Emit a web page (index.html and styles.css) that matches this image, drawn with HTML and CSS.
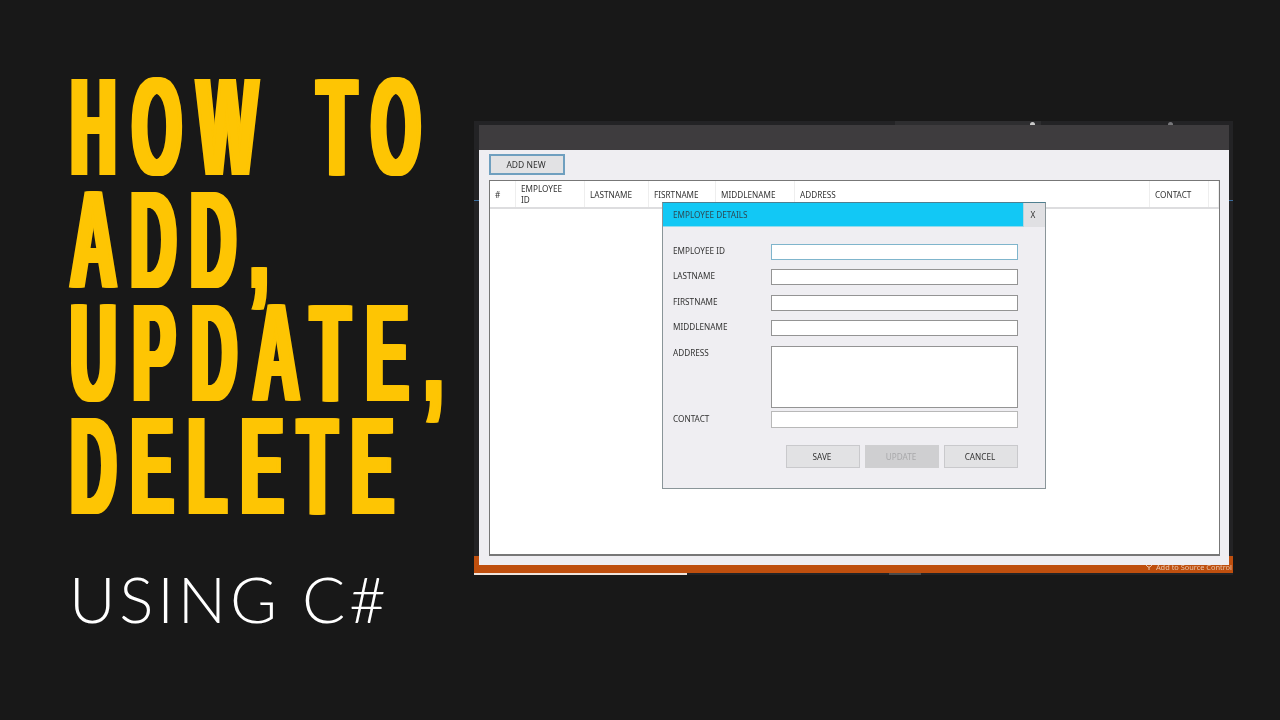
FILE: index.html
```html
<!DOCTYPE html>
<html lang="en">
<head>
<meta charset="utf-8">
<title>How to add, update, delete using C#</title>
<link rel="stylesheet" href="styles.css">
</head>
<body>
<main class="page">
  <section class="intro">
    <h1 class="headline">
      <span class="line line-how">HOW TO</span>
      <span class="line line-add">ADD,</span>
      <span class="line line-update">UPDATE,</span>
      <span class="line line-delete">DELETE</span>
    </h1>
    <p class="subtitle">USING C#</p>
  </section>

  <section class="shot">
    <div class="top-edge"><span class="search-box"></span><span class="dot dot-a"></span><span class="dot dot-b"></span></div>
    <span class="edge-mark edge-left"></span>
    <span class="edge-mark edge-right"></span>
    <div class="statusbar">
      <svg class="plug" viewBox="0 0 8 8" width="8" height="8"><path d="M1 1h6M1 1v2l2 2h2l2-2V1M4 5v3" fill="none" stroke="#e9c3a8" stroke-width="1"/></svg>
      <span class="status-text">Add to Source Control</span>
    </div>
    <span class="status-line"></span>
    <span class="status-tab"></span>
    <div class="window">
      <div class="titlebar"></div>
      <div class="client">
        <button class="add-new">ADD NEW</button>
        <div class="grid">
          <div class="grid-head">
            <div class="col col-num">#</div>
            <div class="col col-id">EMPLOYEE<br>ID</div>
            <div class="col col-last">LASTNAME</div>
            <div class="col col-first">FISRTNAME</div>
            <div class="col col-middle">MIDDLENAME</div>
            <div class="col col-address">ADDRESS</div>
            <div class="col col-contact">CONTACT</div>
            <div class="col col-rest"></div>
          </div>
        </div>
      </div>
    </div>
    <div class="dialog">
      <div class="dialog-head">
        <span class="dialog-title">EMPLOYEE DETAILS</span>
        <button class="close">X</button>
      </div>
      <form class="form">
        <div class="row"><label class="label">EMPLOYEE ID</label><input class="input input-focus"></div>
        <div class="row"><label class="label">LASTNAME</label><input class="input"></div>
        <div class="row"><label class="label">FIRSTNAME</label><input class="input"></div>
        <div class="row"><label class="label">MIDDLENAME</label><input class="input"></div>
        <div class="row row-address"><label class="label">ADDRESS</label><textarea class="input area"></textarea></div>
        <div class="row row-contact"><label class="label">CONTACT</label><input class="input input-light"></div>
        <div class="actions">
          <button class="action" type="button">SAVE</button>
          <button class="action action-off" type="button">UPDATE</button>
          <button class="action" type="button">CANCEL</button>
        </div>
      </form>
    </div>
  </section>
</main>
</body>
</html>
```

FILE: styles.css
```css
* { box-sizing: border-box; }
html, body { margin: 0; padding: 0; }
body {
  width: 1280px;
  height: 720px;
  overflow: hidden;
  background: #181818;
}
.page { display: flex; width: 1280px; height: 720px; }

.intro { width: 474px; flex: none; padding: 76px 0 0 70px; }
.headline { margin: 0; font-weight: 400; }
.line {
  display: block;
  width: 400px;
  height: 113px;
  font-family: "Liberation Sans", sans-serif;
  font-weight: 700;
  font-size: 140px;
  line-height: 102px;
  color: #fec503;
  white-space: nowrap;
  transform: scaleX(0.45);
  transform-origin: left top;
  text-shadow: -6px 0 #fec503, -3px 0 #fec503, 3px 0 #fec503, 6px 0 #fec503, 9px 0 #fec503;
  letter-spacing: 36px;
}
.line-how { word-spacing: 24px; }
.line-add { letter-spacing: 32px; }
.line-update { letter-spacing: 37px; }
.line-delete { letter-spacing: 33px; }
.subtitle {
  margin: 39px 0 0 -1px;
  font-family: Lato, sans-serif;
  font-weight: 300;
  font-size: 64px;
  line-height: 64px;
  letter-spacing: 3.8px;
  color: #fff;
  white-space: nowrap;
}

.shot {
  position: relative;
  flex: none;
  width: 759px;
  height: 454px;
  margin-top: 121px;
  padding: 4px 4px 0 5px;
  background: #232325;
  font-family: "Noto Sans", sans-serif;
  color: #333;
  filter: blur(0.45px);
}
.top-edge { position: absolute; left: 0; right: 0; top: 0; height: 4px; }
.search-box { position: absolute; left: 421px; top: 0; width: 146px; height: 4px; background: #2e2e30; }
.dot { position: absolute; top: 1px; width: 5px; height: 3px; border-radius: 3px 3px 0 0; background: #c9c9c9; }
.dot-a { left: 556px; }
.dot-b { left: 694px; background: #77777a; }
.edge-mark { position: absolute; top: 79px; width: 5px; height: 1px; background: #3c6e9e; }
.edge-left { left: 0; }
.edge-right { right: 0; }

.statusbar {
  position: absolute;
  left: 0; right: 0; top: 435px;
  height: 17px;
  background: #bf4f0e;
  display: flex;
  justify-content: flex-end;
  align-items: flex-end;
  gap: 3px;
  padding-bottom: 2px;
}
.plug { margin-bottom: 1px; }
.status-text { font-size: 7.4px; line-height: 8px; color: #e9c3a8; white-space: nowrap; padding-right: 1px; }
.status-line { position: absolute; left: 0; top: 452px; width: 213px; height: 2px; background: #f0e4dc; }
.status-tab { position: absolute; left: 415px; top: 452px; width: 32px; height: 2px; background: #4a4a4a; }

.window { position: relative; width: 750px; height: 440px; background: #efeef2; }
.titlebar { height: 25px; background: #3e3c3e; }
.client { padding: 4px 9px 0 10px; }
.add-new {
  display: block;
  width: 76px;
  height: 21px;
  padding: 0 2px 0 0;
  border: 2px solid #6f9fbf;
  background: #e2e2e4;
  font: 8.5px "Noto Sans", sans-serif;
  color: #333;
}
.grid {
  margin-top: 5px;
  width: 731px;
  height: 376px;
  background: #fff;
  border: 1px solid #777;
  border-bottom-width: 2px;
}
.grid-head {
  display: flex;
  height: 28px;
  border-bottom: 2px solid #dddddf;
  font-size: 8.2px;
  line-height: 11px;
}
.col {
  display: flex;
  align-items: center;
  padding-left: 5px;
  border-right: 1px solid #eeeeee;
  white-space: nowrap;
}
.col-num { width: 26px; }
.col-id { width: 69px; }
.col-last { width: 64px; }
.col-first { width: 67px; }
.col-middle { width: 79px; }
.col-address { width: 355px; }
.col-contact { width: 59px; }
.col-rest { width: 10px; }

.dialog {
  position: absolute;
  left: 188px;
  top: 81px;
  width: 384px;
  height: 287px;
  background: #efeef2;
  border: 1px solid #8a9599;
  border-top-color: #4f7f90;
}
.dialog-head {
  display: flex;
  align-items: center;
  justify-content: space-between;
  height: 24px;
  background: #12c8f5;
  padding-left: 10px;
  border-bottom: 1px solid #8fdcee;
  font-size: 8.2px;
}
.dialog-title { color: #2c4a55; }
.close {
  width: 22px;
  height: 24px;
  padding: 0 3px 0 0;
  border: 0;
  border-left: 1px solid #b5d5dd;
  background: #e0e0e3;
  font: 8.2px "Noto Sans", sans-serif;
  color: #333;
}
.form { padding: 17px 0 0 10px; }
.row { display: flex; margin-bottom: 9.4px; align-items: center; }
.row-address { align-items: flex-start; margin-bottom: 3.5px; }
.row-address .label { padding-top: 1px; }
.label { width: 98px; flex: none; padding-bottom: 2px; font-size: 8.2px; line-height: 12px; color: #333; white-space: nowrap; }
.input {
  display: block;
  width: 247px;
  height: 16px;
  margin: 0;
  padding: 0;
  background: #fff;
  border: 1px solid #949494;
  border-radius: 0;
  resize: none;
  outline: 0;
}
.input-focus { border-color: #7fb5cc; }
.input-light { height: 17px; border-color: #b8b8b8; }
.area { height: 62px; border-color: #949494; }
.actions { display: flex; gap: 5px; margin: 16.5px 0 0 113px; }
.action {
  width: 74px;
  height: 23px;
  padding: 0 2px 0 0;
  border: 1px solid #c9c9cc;
  background: #e2e2e4;
  font: 8.2px "Noto Sans", sans-serif;
  color: #333;
}
.action-off { background: #cfcfd1; border-color: #cfcfd1; color: #a9a9ab; }
```
